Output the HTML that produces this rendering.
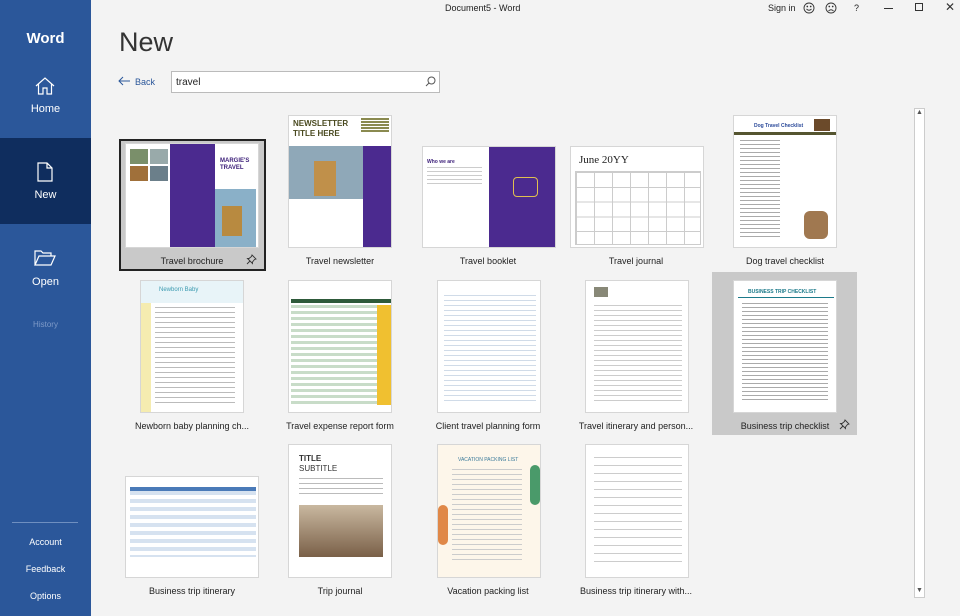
<!DOCTYPE html>
<html><head><meta charset="utf-8"><style>
*{margin:0;padding:0;box-sizing:border-box}
body{width:960px;height:616px;overflow:hidden;background:#f3f3f3;font-family:"Liberation Sans",sans-serif;position:relative;color:#222}
.sb{position:absolute;left:0;top:0;width:91px;height:616px;background:#2b579a;color:#fff}
.sb .t{position:absolute;width:91px;text-align:center;font-size:11px}
.abs{position:absolute}
.th{position:absolute;background:#fff;border:1px solid #d6d6d6;overflow:hidden}
.lb{position:absolute;width:148px;text-align:center;font-size:9px;color:#222}
</style></head><body>
<div class="sb">
 <div class="t" style="top:30px;font-size:15px;font-weight:bold">Word</div>
 <svg class="abs" style="left:35px;top:77px" width="20" height="18" viewBox="0 0 20 18" fill="none" stroke="#fff" stroke-width="1.2"><path d="M1 9 L10 1 L19 9 M3.5 7 V17 H8 V11 H12 V17 H16.5 V7"/></svg>
 <div class="t" style="top:103px">Home</div>
 <div class="abs" style="left:0;top:138px;width:91px;height:86px;background:#0f2d5e"></div>
 <svg class="abs" style="left:37px;top:162px" width="16" height="20" viewBox="0 0 16 20" fill="none" stroke="#fff" stroke-width="1.2"><path d="M1 1 H10 L15 6 V19 H1 Z M10 1 V6 H15"/></svg>
 <div class="t" style="top:189px">New</div>
 <svg class="abs" style="left:34px;top:250px" width="22" height="16" viewBox="0 0 22 16" fill="none" stroke="#fff" stroke-width="1.2"><path d="M1 15 V1 H7 L9 3 H17 V6 M1 15 L5 6 H21 L17 15 Z"/></svg>
 <div class="t" style="top:276px">Open</div>
 <div class="t" style="top:320px;font-size:8px;color:#7f9bc8">History</div>
 <div class="abs" style="left:12px;top:522px;width:66px;height:1px;background:#6f8fc0"></div>
 <div class="t" style="top:537px;font-size:9px">Account</div>
 <div class="t" style="top:564px;font-size:9px">Feedback</div>
 <div class="t" style="top:591px;font-size:9px">Options</div>
</div>
<div class="abs" style="left:445px;top:3px;font-size:9px">Document5 - Word</div>
<div class="abs" style="left:768px;top:3px;font-size:9px">Sign in</div>
<svg class="abs" style="left:803px;top:2px" width="60" height="12" viewBox="0 0 60 12" fill="none" stroke="#333" stroke-width="0.9"><circle cx="6" cy="6" r="5"/><circle cx="4.3" cy="4.5" r=".4"/><circle cx="7.7" cy="4.5" r=".4"/><path d="M3.5 7 Q6 9.5 8.5 7"/><circle cx="28" cy="6" r="5"/><circle cx="26.3" cy="4.5" r=".4"/><circle cx="29.7" cy="4.5" r=".4"/><path d="M25.5 9 Q28 6.5 30.5 9"/></svg>
<div class="abs" style="left:854px;top:3px;font-size:9px">?</div>
<div class="abs" style="left:884px;top:8px;width:9px;height:1px;background:#333"></div>
<div class="abs" style="left:915px;top:3px;width:8px;height:8px;border:1px solid #333"></div>
<div class="abs" style="left:945px;top:0px;font-size:12px;color:#333">✕</div>
<div class="abs" style="left:119px;top:27px;font-size:27px;font-weight:300;color:#333">New</div>
<svg class="abs" style="left:118px;top:76px" width="13" height="10" viewBox="0 0 13 10" fill="none" stroke="#2b579a" stroke-width="1"><path d="M12 5 H1 M5 1 L1 5 L5 9"/></svg>
<div class="abs" style="left:135px;top:77px;font-size:9px;color:#2b579a">Back</div>
<div class="abs" style="left:171px;top:71px;width:269px;height:22px;background:#fff;border:1px solid #bbb;font-size:10px;padding:5px 4px">travel</div>
<svg class="abs" style="left:425px;top:76px" width="11" height="11" viewBox="0 0 11 11" fill="none" stroke="#555" stroke-width="1"><circle cx="6.5" cy="4.5" r="3.5"/><path d="M4 7 L1 10"/></svg>
<div class="abs" style="left:914px;top:108px;width:11px;height:490px;background:#fff;border:1px solid #ccc"></div>
<div class="abs" style="left:916px;top:109px;font-size:7px;color:#555">▲</div>
<div class="abs" style="left:916px;top:587px;font-size:7px;color:#555">▼</div>

<!-- Row 1 -->
<div class="abs" style="left:119px;top:139px;width:147px;height:132px;background:#c9c9c9;border:2px solid #222"></div>
<div class="th" style="left:125px;top:143px;width:134px;height:105px">
 <div class="abs" style="left:4px;top:5px;width:18px;height:15px;background:#7a8f6a"></div><div class="abs" style="left:24px;top:5px;width:18px;height:15px;background:#9aa"></div>
 <div class="abs" style="left:4px;top:22px;width:18px;height:15px;background:#a0703a"></div><div class="abs" style="left:24px;top:22px;width:18px;height:15px;background:#6b7f8a"></div>
 <div class="abs" style="left:44px;top:0;width:45px;height:105px;background:#4b2a8f"></div>
 <div class="abs" style="left:89px;top:45px;width:41px;height:60px;background:#8ab0c8"></div>
 <div class="abs" style="left:96px;top:62px;width:20px;height:30px;background:#b88a40"></div>
 <div class="abs" style="left:94px;top:14px;font-size:6px;font-weight:bold;color:#3b1e78;line-height:7px">MARGIE'S<br>TRAVEL</div>
</div>
<div class="lb" style="left:118px;top:256px">Travel brochure</div>
<svg class="abs" style="left:246px;top:254px" width="11" height="11" viewBox="0 0 11 11" fill="none" stroke="#333" stroke-width="0.9"><path d="M6 1 L10 5 L8.5 5.5 L6.5 8 L6.5 9.5 L1.5 4.5 L3 4.5 L5.5 2.5 Z M4 7 L1 10"/></svg>

<div class="th" style="left:288px;top:115px;width:104px;height:133px">
 <div class="abs" style="left:4px;top:3px;font-size:8px;font-weight:bold;line-height:10px;color:#4a4a20">NEWSLETTER<br>TITLE HERE</div>
 <div class="abs" style="left:72px;top:2px;width:28px;height:14px;background:repeating-linear-gradient(#8a8a50 0 2px,#fff 2px 3px)"></div>
 <div class="abs" style="left:0;top:30px;width:74px;height:53px;background:#8fa8b8"></div>
 <div class="abs" style="left:25px;top:45px;width:22px;height:35px;background:#c0904a"></div>
 <div class="abs" style="left:74px;top:30px;width:30px;height:103px;background:#4b2a8f"></div>
</div>
<div class="lb" style="left:266px;top:256px">Travel newsletter</div>

<div class="th" style="left:422px;top:146px;width:134px;height:102px">
 <div class="abs" style="left:4px;top:12px;font-size:5px;color:#3b1e78;font-weight:bold">Who we are</div>
 <div class="abs" style="left:4px;top:20px;width:55px;height:20px;background:repeating-linear-gradient(#ccc 0 1px,#fff 1px 4px)"></div>
 <div class="abs" style="left:66px;top:0;width:68px;height:102px;background:#4b2a8f"></div>
 <div class="abs" style="left:90px;top:30px;width:25px;height:20px;border:1px solid #e0c050;border-radius:4px"></div>
</div>
<div class="lb" style="left:414px;top:256px">Travel booklet</div>

<div class="th" style="left:570px;top:146px;width:134px;height:102px">
 <div class="abs" style="left:8px;top:7px;font-size:11px;font-family:'Liberation Serif',serif">June 20YY</div>
 <div class="abs" style="left:4px;top:24px;width:126px;height:74px;background:repeating-linear-gradient(90deg,#ccc 0 1px,transparent 1px 18px),repeating-linear-gradient(#ccc 0 1px,transparent 1px 14.8px);border:1px solid #ccc"></div>
</div>
<div class="lb" style="left:562px;top:256px">Travel journal</div>

<div class="th" style="left:733px;top:115px;width:104px;height:133px">
 <div class="abs" style="left:20px;top:7px;font-size:5px;color:#2b4a9a;font-weight:bold">Dog Travel Checklist</div>
 <div class="abs" style="left:80px;top:3px;width:16px;height:12px;background:#6b4a2a"></div>
 <div class="abs" style="left:0;top:16px;width:104px;height:3px;background:#555530"></div>
 <div class="abs" style="left:6px;top:24px;width:40px;height:100px;background:repeating-linear-gradient(#aaa 0 1px,#fff 1px 4px)"></div>
 <div class="abs" style="left:70px;top:95px;width:24px;height:28px;background:#a07850;border-radius:6px"></div>
</div>
<div class="lb" style="left:711px;top:256px">Dog travel checklist</div>

<!-- Row 2 -->
<div class="th" style="left:140px;top:280px;width:104px;height:133px">
 <div class="abs" style="left:0;top:0;width:104px;height:22px;background:#e8f4f8"></div>
 <div class="abs" style="left:18px;top:6px;font-size:6px;color:#3a9ab0">Newborn Baby</div>
 <div class="abs" style="left:0;top:22px;width:10px;height:111px;background:#f5ecb0"></div>
 <div class="abs" style="left:14px;top:26px;width:80px;height:100px;background:repeating-linear-gradient(#bbb 0 1px,#fff 1px 5px)"></div>
</div>
<div class="lb" style="left:118px;top:421px">Newborn baby planning ch...</div>

<div class="th" style="left:288px;top:280px;width:104px;height:133px">
 <div class="abs" style="left:2px;top:18px;width:100px;height:4px;background:#2e5a3a"></div>
 <div class="abs" style="left:2px;top:24px;width:100px;height:100px;background:repeating-linear-gradient(#c8dcc8 0 3px,#fff 3px 6px)"></div>
 <div class="abs" style="left:88px;top:24px;width:14px;height:100px;background:#f0c030"></div>
</div>
<div class="lb" style="left:266px;top:421px">Travel expense report form</div>

<div class="th" style="left:437px;top:280px;width:104px;height:133px">
 <div class="abs" style="left:6px;top:14px;width:92px;height:110px;background:repeating-linear-gradient(#d0dbe8 0 1px,#fff 1px 5px)"></div>
</div>
<div class="lb" style="left:414px;top:421px">Client travel planning form</div>

<div class="th" style="left:585px;top:280px;width:104px;height:133px">
 <div class="abs" style="left:8px;top:6px;width:14px;height:10px;background:#887"></div>
 <div class="abs" style="left:8px;top:24px;width:88px;height:100px;background:repeating-linear-gradient(#ccc 0 1px,#fff 1px 5px)"></div>
</div>
<div class="lb" style="left:562px;top:421px">Travel itinerary and person...</div>

<div class="abs" style="left:712px;top:272px;width:145px;height:163px;background:#c9c9c9"></div>
<div class="th" style="left:733px;top:280px;width:104px;height:133px">
 <div class="abs" style="left:14px;top:8px;font-size:5px;color:#1c7a8a;font-weight:bold">BUSINESS TRIP CHECKLIST</div>
 <div class="abs" style="left:4px;top:16px;width:96px;height:1px;background:#1c7a8a"></div>
 <div class="abs" style="left:8px;top:22px;width:86px;height:100px;background:repeating-linear-gradient(#aaa 0 1px,#fff 1px 4px)"></div>
</div>
<div class="lb" style="left:711px;top:421px">Business trip checklist</div>
<svg class="abs" style="left:839px;top:419px" width="11" height="11" viewBox="0 0 11 11" fill="none" stroke="#333" stroke-width="0.9"><path d="M6 1 L10 5 L8.5 5.5 L6.5 8 L6.5 9.5 L1.5 4.5 L3 4.5 L5.5 2.5 Z M4 7 L1 10"/></svg>

<!-- Row 3 -->
<div class="th" style="left:125px;top:476px;width:134px;height:102px">
 <div class="abs" style="left:4px;top:10px;width:126px;height:4px;background:#4a7ab8"></div>
 <div class="abs" style="left:4px;top:14px;width:126px;height:66px;background:repeating-linear-gradient(#d6e2f0 0 4px,#fff 4px 8px)"></div>
</div>
<div class="lb" style="left:118px;top:586px">Business trip itinerary</div>

<div class="th" style="left:288px;top:444px;width:104px;height:134px">
 <div class="abs" style="left:10px;top:9px;font-size:8px;font-weight:bold;line-height:10px;color:#333">TITLE<br><span style="font-weight:normal">SUBTITLE</span></div>
 <div class="abs" style="left:10px;top:33px;width:84px;height:20px;background:repeating-linear-gradient(#bbb 0 1px,#fff 1px 5px)"></div>
 <div class="abs" style="left:10px;top:60px;width:84px;height:52px;background:linear-gradient(#c9b8a0,#7a6048)"></div>
</div>
<div class="lb" style="left:266px;top:586px">Trip journal</div>

<div class="th" style="left:437px;top:444px;width:104px;height:134px;background:#fdf6ea">
 <div class="abs" style="left:20px;top:12px;font-size:5px;color:#3a7a9a">VACATION PACKING LIST</div>
 <div class="abs" style="left:14px;top:24px;width:70px;height:95px;background:repeating-linear-gradient(#ccc 0 1px,transparent 1px 5px)"></div>
 <div class="abs" style="left:0;top:60px;width:10px;height:40px;background:#e08848;border-radius:5px"></div>
 <div class="abs" style="left:92px;top:20px;width:10px;height:40px;background:#4a9a6a;border-radius:5px"></div>
</div>
<div class="lb" style="left:414px;top:586px">Vacation packing list</div>

<div class="th" style="left:585px;top:444px;width:104px;height:134px">
 <div class="abs" style="left:8px;top:12px;width:88px;height:106px;background:repeating-linear-gradient(#ccc 0 1px,#fff 1px 8px),linear-gradient(90deg,#fff 0 30px,#ccc 30px 31px,#fff 31px)"></div>
</div>
<div class="lb" style="left:562px;top:586px">Business trip itinerary with...</div>
</body></html>
